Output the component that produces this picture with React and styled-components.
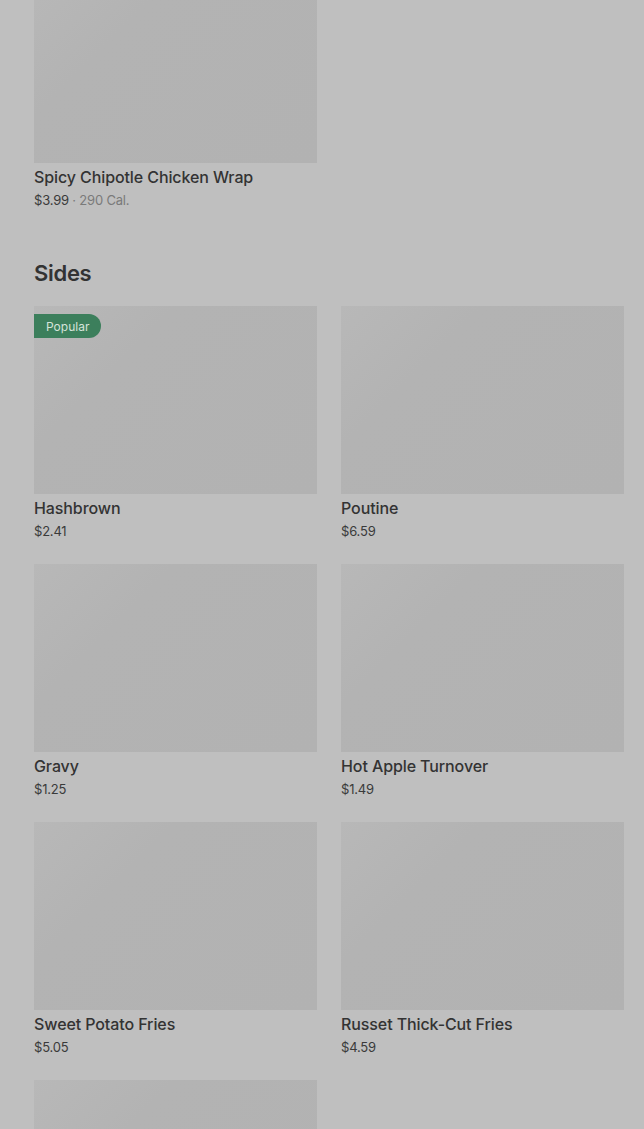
import React from "react";
import styled, { createGlobalStyle } from "styled-components";

const Global = createGlobalStyle`
  html, body { margin: 0; padding: 0; background: #bfbfbf; }
  body { font-family: Inter, "Noto Sans", "Liberation Sans", sans-serif; overflow: hidden; }
`;

const Page = styled.div`
  padding: 0 20px 0 34px;
  margin-top: -25px;
  display: flex;
  flex-direction: column;
`;

const Section = styled.section`
  display: flex;
  flex-direction: column;
`;

const Heading = styled.h2`
  margin: 48px 0 17px;
  font-size: 22px;
  line-height: 32px;
  font-weight: 600;
  color: #333;
  letter-spacing: -0.3px;
`;

const Grid = styled.div`
  display: grid;
  grid-template-columns: 283px 283px;
  column-gap: 24px;
  row-gap: 24px;
`;

const Card = styled.div`
  display: flex;
  flex-direction: column;
`;

const Thumb = styled.div`
  position: relative;
  height: 188px;
  background: linear-gradient(135deg, #b8b8b8 0%, #b3b3b3 30%, #b2b2b2 100%);
`;

const Badge = styled.span`
  position: absolute;
  left: 0;
  top: 8px;
  height: 24px;
  padding: 0 12px;
  display: flex;
  align-items: center;
  background: #3c7f5c;
  color: #d5e3da;
  font-size: 12px;
  border-radius: 0 12px 12px 0;
`;

const Title = styled.div`
  margin-top: 4px;
  font-size: 16px;
  line-height: 20px;
  font-weight: 500;
  color: #333;
  letter-spacing: -0.1px;
`;

const Meta = styled.div`
  margin-top: 4px;
  font-size: 13px;
  line-height: 18px;
  color: #3a3a3a;
  letter-spacing: -0.2px;
`;

const Cal = styled.span`
  color: #7a7a7a;
`;

const sides = [
  { name: "Hashbrown", price: "$2.41", popular: true },
  { name: "Poutine", price: "$6.59" },
  { name: "Gravy", price: "$1.25" },
  { name: "Hot Apple Turnover", price: "$1.49" },
  { name: "Sweet Potato Fries", price: "$5.05" },
  { name: "Russet Thick-Cut Fries", price: "$4.59" },
  { name: "Onion Rings", price: "$3.49" },
];

function Item({ name, price, cal, popular }) {
  return (
    <Card>
      <Thumb>{popular && <Badge>Popular</Badge>}</Thumb>
      <Title>{name}</Title>
      <Meta>
        {price}
        {cal && <Cal> · {cal}</Cal>}
      </Meta>
    </Card>
  );
}

export default function App() {
  return (
    <>
      <Global />
      <Page>
        <Grid>
          <Item name="Spicy Chipotle Chicken Wrap" price="$3.99" cal="290 Cal." />
        </Grid>
        <Section>
          <Heading>Sides</Heading>
          <Grid>
            {sides.map((s) => (
              <Item key={s.name} {...s} />
            ))}
          </Grid>
        </Section>
      </Page>
    </>
  );
}
